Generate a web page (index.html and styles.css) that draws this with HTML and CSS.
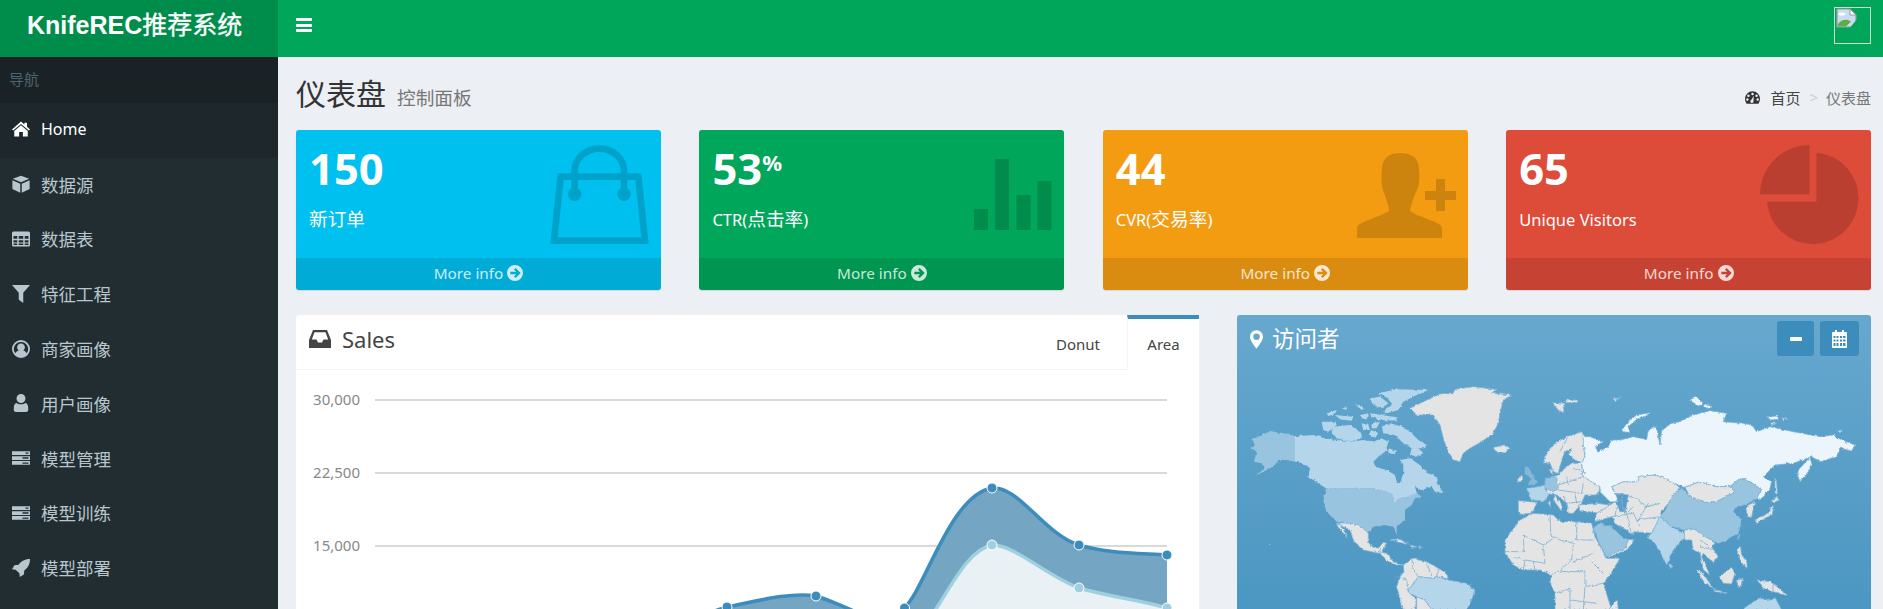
FILE: index.html
```html
<!DOCTYPE html>
<html lang="zh-CN">
<head>
    <meta charset="UTF-8">
    <title>KnifeREC推荐系统</title>
    <link rel="stylesheet" href="styles.css">
</head>
<body>
    <svg class="sprite" width="0" height="0">
        <filter id="coast" x="-5%" y="-5%" width="110%" height="110%">
            <feTurbulence type="fractalNoise" baseFrequency="0.09" numOctaves="3" seed="4"/>
            <feDisplacementMap in="SourceGraphic" scale="9" xChannelSelector="R" yChannelSelector="G"/>
        </filter>
        <symbol id="i-home" viewBox="0 0 24 20"><path d="M12 0 L16.5 4 V1.5 H20 V7 L24 10.5 L22.5 12 L12 3.2 L1.5 12 L0 10.5 Z M12 5 L21 12.5 V20 H14.5 V14 H9.5 V20 H3 V12.5 Z"/></symbol>
        <symbol id="i-cube" viewBox="0 0 24 24"><path d="M12 1 L23 5 L12 9.5 L1 5 Z M0.5 7 L11 11.5 V23.5 L0.5 18.5 Z M23.5 7 V18.5 L13 23.5 V11.5 Z" fill-rule="evenodd"/></symbol>
        <symbol id="i-table" viewBox="0 0 24 20"><path fill-rule="evenodd" d="M2 0 H22 A2 2 0 0 1 24 2 V18 A2 2 0 0 1 22 20 H2 A2 2 0 0 1 0 18 V2 A2 2 0 0 1 2 0 Z M2 6 V9.5 H7 V6 Z M9 6 V9.5 H15 V6 Z M17 6 V9.5 H22 V6 Z M2 11.5 V14.5 H7 V11.5 Z M9 11.5 V14.5 H15 V11.5 Z M17 11.5 V14.5 H22 V11.5 Z M2 16 V18 H7 V16 Z M9 16 V18 H15 V16 Z M17 16 V18 H22 V16 Z"/></symbol>
        <symbol id="i-filter" viewBox="0 0 20 20"><path d="M0 0 H20 L12.5 8.5 V20 L7.5 16.5 V8.5 Z"/></symbol>
        <symbol id="i-circle-user" viewBox="0 0 24 24"><path fill-rule="evenodd" d="M12 0 A12 12 0 1 1 12 24 A12 12 0 1 1 12 0 Z M12 2.5 A9.5 9.5 0 0 0 4.5 17.8 C5.5 15.5 7 14.5 9 14 A5.2 5.2 0 1 1 15 14 C17 14.5 18.5 15.5 19.5 17.8 A9.5 9.5 0 0 0 12 2.5 Z"/></symbol>
        <symbol id="i-user" viewBox="0 0 16 20"><path d="M8 0 A5 5 0 1 1 8 10 A5 5 0 1 1 8 0 Z M3 10 C5 12 11 12 13 10 C15 10.5 16 12.5 16 15.5 V17.5 C16 19 15 20 13.5 20 H2.5 C1 20 0 19 0 17.5 V15.5 C0 12.5 1 10.5 3 10 Z"/></symbol>
        <symbol id="i-server" viewBox="0 0 24 18"><path fill-rule="evenodd" d="M0 0 H24 V5 H0 Z M0 6.5 H24 V11.5 H0 Z M0 13 H24 V18 H0 Z M14 8 V10 H22 V8 Z M14 15 V16.5 H22 V15 Z M18 1.5 V3.2 H22 V1.5 Z"/></symbol>
        <symbol id="i-rocket" viewBox="0 0 22 22"><path d="M22 0 C22 7 19 11 15 14 L14.5 19 L9.5 22 L9 17.5 L4.5 13 L0 12.5 L3 7.5 L8 7 C11 3 15 0 22 0 Z"/></symbol>
        <symbol id="i-arrow" viewBox="0 0 24 24"><path fill-rule="evenodd" d="M12 0 A12 12 0 1 1 12 24 A12 12 0 1 1 12 0 Z M13 4.5 L10.5 7 L13.8 10 H5 V14 H13.8 L10.5 17 L13 19.5 L20.5 12 Z"/></symbol>
    </svg>

    <header class="main-header">
        <div class="logo">KnifeREC<span class="logo-cn">推荐系统</span></div>
        <nav class="navbar">
            <div class="bars"><span></span><span></span><span></span></div>
            <div class="avatar">
                <svg width="21" height="21" viewBox="0 0 21 21">
                    <path d="M1 1 H14 L20 7 V19 H1 Z" fill="#c9dcf2" stroke="#9a9a9a" stroke-width="1.2"/>
                    <ellipse cx="6" cy="6" rx="3.5" ry="1.6" fill="#fff"/>
                    <path d="M2 18.5 V16 C6 11 11 11 15 13.5 L10 18.5 Z" fill="#5fae45"/>
                    <path d="M14 1 V7 H20 Z" fill="#fff" stroke="#9a9a9a"/>
                    <path d="M13 21 L21 11 V21 Z" fill="#00a65a"/>
                </svg>
            </div>
        </nav>
    </header>

    <div class="wrapper">
        <aside class="sidebar">
            <div class="side-label">导航</div>
            <ul class="side-menu">
                <li class="active"><svg class="side-icon"><use href="#i-home"/></svg>Home</li>
                <li><svg class="side-icon"><use href="#i-cube"/></svg>数据源</li>
                <li><svg class="side-icon"><use href="#i-table"/></svg>数据表</li>
                <li><svg class="side-icon"><use href="#i-filter"/></svg>特征工程</li>
                <li><svg class="side-icon"><use href="#i-circle-user"/></svg>商家画像</li>
                <li><svg class="side-icon"><use href="#i-user"/></svg>用户画像</li>
                <li><svg class="side-icon"><use href="#i-server"/></svg>模型管理</li>
                <li><svg class="side-icon"><use href="#i-server"/></svg>模型训练</li>
                <li><svg class="side-icon"><use href="#i-rocket"/></svg>模型部署</li>
            </ul>
        </aside>

        <main class="content">
            <div class="content-header">
                <h1>仪表盘<small>控制面板</small></h1>
                <div class="breadcrumb">
                    <svg class="crumb-icon" viewBox="0 0 24 20">
                        <path fill-rule="evenodd" d="M12 0 A12 12 0 0 1 24 12 C24 15 23 17.5 21.5 20 H2.5 C1 17.5 0 15 0 12 A12 12 0 0 1 12 0 Z M12 2.5 A2 2 0 1 0 12 6.5 A2 2 0 1 0 12 2.5 Z M5.5 5 A2 2 0 1 0 5.5 9 A2 2 0 1 0 5.5 5 Z M18.5 5 A2 2 0 1 0 18.5 9 A2 2 0 1 0 18.5 5 Z M3.7 11 A2 2 0 1 0 3.7 15 A2 2 0 1 0 3.7 11 Z M20.3 11 A2 2 0 1 0 20.3 15 A2 2 0 1 0 20.3 11 Z M14 7 L10 14 A2.5 2.5 0 1 0 13.5 15.5 Z"/>
                    </svg>
                    <span class="crumb-link">首页</span>
                    <span class="crumb-sep">&gt;</span>
                    <span class="crumb-now">仪表盘</span>
                </div>
            </div>

            <section class="stats">
                <div class="stat bg-aqua">
                    <div class="stat-inner">
                        <h3>150</h3>
                        <p>新订单</p>
                    </div>
                    <svg class="stat-icon icon-bag" viewBox="0 0 366 390">
                        <path d="M65 140 H298 L318 332 H45 Z" fill="none" stroke="#000" stroke-width="20"/>
                        <path d="M107 190 V122 A74 66 0 0 1 255 122 V190" fill="none" stroke="#000" stroke-width="20"/>
                        <circle cx="107" cy="193" r="20"/>
                        <circle cx="255" cy="193" r="20"/>
                    </svg>
                    <a class="stat-footer">More info <svg class="arrow-icon"><use href="#i-arrow"/></svg></a>
                </div>
                <div class="stat bg-green">
                    <div class="stat-inner">
                        <h3>53<sup>%</sup></h3>
                        <p><span class="lat">CTR(</span>点击率<span class="lat">)</span></p>
                    </div>
                    <svg class="stat-icon icon-bars" viewBox="0 0 78 71">
                        <rect x="0" y="50" width="14" height="21"/>
                        <rect x="21" y="0" width="14" height="71"/>
                        <rect x="42.5" y="36" width="14" height="35"/>
                        <rect x="63.5" y="22" width="14" height="49"/>
                    </svg>
                    <a class="stat-footer">More info <svg class="arrow-icon"><use href="#i-arrow"/></svg></a>
                </div>
                <div class="stat bg-yellow">
                    <div class="stat-inner">
                        <h3>44</h3>
                        <p><span class="lat">CVR(</span>交易率<span class="lat">)</span></p>
                    </div>
                    <svg class="stat-icon icon-person" viewBox="1340 140 128 110">
                        <path d="M1357 238 V228 C1357 222 1378 218 1389 211 C1389 205 1385 196 1383 190 C1381 184 1381 170 1383 163 C1385 156 1392 153 1400 153 C1408 153 1416 156 1418 163 C1420 172 1420 184 1417 190 C1414 196 1411 205 1410 211 C1420 218 1442 222 1442 228 V238 Z"/>
                        <path d="M1436 179 H1445 V191 H1456 V200 H1445 V211 H1436 V200 H1425 V191 H1436 Z"/>
                    </svg>
                    <a class="stat-footer">More info <svg class="arrow-icon"><use href="#i-arrow"/></svg></a>
                </div>
                <div class="stat bg-red">
                    <div class="stat-inner">
                        <h3>65</h3>
                        <p><span class="lat">Unique Visitors</span></p>
                    </div>
                    <svg class="stat-icon icon-pie" viewBox="830 420 320 320">
                        <path d="M1011 605 V458 A137 137 0 1 1 863 605 Z"/>
                        <path d="M990 582 H842 A148 148 0 0 1 990 435 Z"/>
                    </svg>
                    <a class="stat-footer">More info <svg class="arrow-icon"><use href="#i-arrow"/></svg></a>
                </div>
            </section>

            <section class="panels">
                <div class="sales-box">
                    <div class="tabs">
                        <div class="tabs-title">
                            <svg class="inbox-icon" viewBox="0 0 22 18"><path fill-rule="evenodd" d="M4 0 H18 L22 10 V18 H0 V10 Z M5.5 2.2 L2.8 9.5 H7.5 L9 12.5 H13 L14.5 9.5 H19.2 L16.5 2.2 Z"/></svg>
                            Sales
                        </div>
                        <div class="tab">Donut</div>
                        <div class="tab tab-active">Area</div>
                    </div>
                    <svg class="chart" viewBox="296 370 903 240" width="903" height="240">
                        <g class="grid">
                            <line x1="375" y1="400" x2="1167" y2="400"/>
                            <line x1="375" y1="473" x2="1167" y2="473"/>
                            <line x1="375" y1="546" x2="1167" y2="546"/>
                        </g>
                        <g class="axis">
                            <text x="360" y="405">30,000</text>
                            <text x="360" y="478">22,500</text>
                            <text x="360" y="551">15,000</text>
                        </g>
                        <path class="area-a" d="M650 640 C680 625 700 615 727 607 C757 601 790 592 816 596 C835 602 855 612 875 620 C888 624 898 617 904 608 C925 590 950 495 992 488 C1018 485 1045 535 1079 545 C1105 553 1135 553 1167 555 V640 Z"/>
                        <path class="line-a" d="M650 640 C680 625 700 615 727 607 C757 601 790 592 816 596 C835 602 855 612 875 620 C888 624 898 617 904 608 C925 590 950 495 992 488 C1018 485 1045 535 1079 545 C1105 553 1135 553 1167 555"/>
                        <path class="area-b" d="M925 640 V625 C945 600 965 550 992 545 C1015 545 1045 575 1079 588 C1110 597 1140 600 1167 608 V640 Z"/>
                        <path class="line-b" d="M925 625 C945 600 965 550 992 545 C1015 545 1045 575 1079 588 C1110 597 1140 600 1167 608"/>
                        <g class="dots-a">
                            <circle cx="727" cy="607" r="5"/><circle cx="816" cy="596" r="5"/><circle cx="904.5" cy="608" r="5"/>
                            <circle cx="992" cy="488" r="5"/><circle cx="1079" cy="545" r="5"/><circle cx="1167" cy="555" r="5"/>
                        </g>
                        <g class="dots-b">
                            <circle cx="992" cy="545" r="5"/><circle cx="1079" cy="588" r="5"/><circle cx="1167" cy="608" r="5"/>
                        </g>
                    </svg>
                </div>

                <div class="map-box">
                    <div class="map-head">
                        <svg class="pin-icon" viewBox="0 0 14 20"><path fill-rule="evenodd" d="M7 0 A7 7 0 0 1 14 7 C14 11 9 17 7 20 C5 17 0 11 0 7 A7 7 0 0 1 7 0 Z M7 3.5 A3.5 3.5 0 1 0 7 10.5 A3.5 3.5 0 1 0 7 3.5 Z"/></svg>
                        <h3>访问者</h3>
                        <div class="map-tools">
                            <button class="tool-btn"><span class="minus"></span></button>
                            <button class="tool-btn tool-cal">
                                <svg width="15" height="18" viewBox="0 0 15 18"><path fill="#fff" fill-rule="evenodd" d="M1 2 H3 V0 H5 V2 H10 V0 H12 V2 H14 A1 1 0 0 1 15 3 V17 A1 1 0 0 1 14 18 H1 A1 1 0 0 1 0 17 V3 A1 1 0 0 1 1 2 Z M1.5 6 V8 H3.5 V6 Z M4.5 6 V8 H6.5 V6 Z M8 6 V8 H10 V6 Z M11 6 V8 H13.5 V6 Z M1.5 9.5 V11.5 H3.5 V9.5 Z M4.5 9.5 V11.5 H6.5 V9.5 Z M8 9.5 V11.5 H10 V9.5 Z M11 9.5 V11.5 H13.5 V9.5 Z M1.5 13 V16 H3.5 V13 Z M4.5 13 V16 H6.5 V13 Z M8 13 V16 H10 V13 Z M11 13 V16 H13.5 V13 Z"/></svg>
                            </button>
                        </div>
                    </div>
                    <svg class="world" viewBox="1237 372 634 240" width="634" height="240">
                        <g transform="translate(1240 380) scale(0.3333)" filter="url(#coast)">
                            <!-- north america, greenland -->
                            <g class="c-mid">
                                <path d="M165 168 L130 160 L90 153 L60 168 L35 178 L45 195 L30 205 L50 215 L42 245 L65 250 L75 262 L45 288 L90 265 L105 255 L115 240 L140 240 L165 245 Z"/>
                                <path d="M258 325 L400 325 L440 335 L462 345 L462 370 L480 355 L510 345 L525 335 L545 350 L525 355 L515 375 L495 390 L495 420 L470 440 L470 465 L460 440 L435 435 L400 440 L385 458 L355 435 L330 430 L290 425 L260 395 L250 365 Z"/>
                            </g>
                            <g class="c-light">
                                <path d="M165 168 L230 165 L250 175 L290 180 L330 185 L370 180 L400 185 L425 175 L445 185 L440 205 L445 210 L420 225 L400 245 L405 260 L440 270 L465 285 L470 305 L480 310 L490 280 L490 255 L480 240 L510 235 L540 255 L565 280 L595 295 L590 310 L610 335 L585 335 L575 320 L545 330 L525 320 L530 340 L500 350 L480 355 L462 370 L462 345 L440 335 L400 325 L258 325 L235 310 L205 290 L210 265 L190 250 L165 245 Z"/>
                                <path d="M425 140 L450 130 L490 140 L520 165 L535 180 L560 195 L555 205 L535 205 L550 220 L530 230 L510 225 L515 205 L490 190 L465 165 L430 160 Z"/>
                                <path d="M445 205 L470 212 L465 222 L445 220 Z"/>
                                <path d="M245 125 L285 125 L290 135 L265 155 L250 150 Z"/>
                                <path d="M280 140 L330 135 L365 160 L365 175 L330 185 L290 175 L275 155 Z"/>
                                <path d="M260 100 L290 90 L285 102 L265 108 Z"/>
                                <path d="M285 105 L340 110 L335 122 L300 118 Z"/>
                                <path d="M360 105 L385 100 L380 118 L365 115 Z"/>
                                <path d="M390 100 L470 112 L470 122 L420 120 L395 110 Z"/>
                                <path d="M365 130 L385 135 L390 150 L370 150 Z"/>
                                <path d="M395 130 L420 125 L410 145 L395 145 Z"/>
                                <path d="M395 150 L415 160 L405 175 L390 165 Z"/>
                                <path d="M345 72 L375 85 L365 90 Z"/>
                                <path d="M305 85 L320 80 L320 90 Z"/>
                                <path d="M390 55 L420 50 L445 70 L425 85 L400 75 Z"/>
                                <path d="M415 40 L470 28 L565 30 L530 45 L490 65 L475 90 L440 100 L430 95 L455 75 L445 55 Z"/>
                            </g>
                            <g class="c-land">
                                <path d="M510 85 L560 60 L600 42 L640 38 L645 28 L700 20 L770 28 L755 40 L815 45 L790 60 L780 100 L775 130 L760 160 L725 185 L690 205 L670 220 L660 245 L640 240 L620 205 L610 175 L600 135 L580 105 L530 105 Z"/>
                                <path d="M760 203 L790 195 L810 205 L795 218 L770 218 Z"/>
                                <path d="M290 428 L330 430 L355 435 L385 458 L385 485 L395 500 L415 505 L430 487 L440 490 L430 510 L415 520 L395 515 L370 510 L345 490 L330 450 L310 440 Z"/>
                                <path d="M288 428 L305 440 L325 475 L300 450 Z"/>
                                <path d="M415 515 L440 520 L460 545 L490 555 L470 555 L445 545 L430 530 Z"/>
                                <path d="M450 478 L480 478 L505 492 L480 488 Z"/>
                                <path d="M510 495 L530 500 L515 502 Z"/>
                                <path d="M535 500 L548 503 L537 503 Z"/>
                                <path d="M490 555 L515 535 L560 545 L595 565 L620 580 L625 595 L590 590 L575 595 L535 590 L520 610 L505 635 L530 660 L525 690 L490 690 L470 620 L480 590 L492 575 Z"/>
                                <path d="M530 650 L555 660 L575 690 L530 690 Z"/>
                                <circle cx="89" cy="495" r="2"/>
                            </g>
                            <path class="c-light" d="M535 590 L575 595 L590 590 L625 600 L680 610 L705 630 L695 660 L680 690 L575 690 L555 660 L530 650 L510 640 L505 630 L522 610 Z"/>
                            <path class="borders" d="M515 535 L520 570 L535 590 M560 545 L575 590 M595 565 L590 590 M470 590 L500 600 L505 635 M415 515 L425 505 M440 520 L450 530 M385 485 L395 500"/>

                            <!-- europe, africa, middle east -->
                            <g transform="translate(780 0)">
                                <g class="c-land">
                                    <path d="M135 228 L165 190 L200 170 L245 155 L258 175 L250 195 L255 230 L245 250 L225 240 L205 225 L215 205 L195 215 L185 240 L175 280 L160 275 L150 250 L130 250 Z"/>
                                    <path d="M148 268 L160 268 L155 285 Z"/>
                                    <path d="M175 285 L200 260 L215 250 L245 250 L250 290 L300 320 L295 345 L255 345 L245 370 L220 400 L205 400 L200 370 L170 345 L135 340 L145 325 L140 295 Z"/>
                                    <path d="M165 345 L185 375 L185 395 L175 380 L160 360 Z"/>
                                    <path d="M52 295 L68 285 L68 303 L55 307 Z"/>
                                    <path d="M55 362 L112 367 L95 400 L62 403 L55 395 Z"/>
                                    <path d="M145 365 L152 365 L150 385 Z"/>
                                    <path d="M235 375 L290 370 L330 375 L335 395 L300 400 L265 395 L240 395 Z"/>
                                    <path d="M330 375 L345 365 L360 370 L355 385 L375 400 L385 345 L345 340 L335 320 L370 305 L410 305 L415 290 L460 285 L490 290 L540 320 L505 370 L480 400 L505 420 L510 435 L480 410 L470 440 L460 460 L400 455 L395 465 L380 450 L350 435 L335 410 L285 425 L290 400 Z"/>
                                    <path d="M15 480 L60 420 L100 400 L160 405 L180 425 L230 425 L275 430 L285 470 L320 535 L360 535 L330 585 L310 610 L335 690 L165 690 L165 640 L150 605 L155 585 L120 570 L70 570 L45 560 L15 520 Z"/>
                                    <path d="M325 690 L352 658 L355 690 Z"/>
                                    <path d="M385 478 L405 480 L380 510 L325 532 L318 525 L375 505 Z"/>
                                    <path d="M155 68 L195 70 L190 98 L175 90 Z"/>
                                    <path d="M195 60 L238 60 L230 68 L200 68 Z"/>
                                    <path d="M338 55 L360 55 L345 62 Z"/>
                                </g>
                                <path class="c-mid" d="M280 445 L300 428 L340 445 L365 470 L385 480 L375 505 L320 530 L300 495 Z"/>
                                <path class="c-uk" d="M75 260 L85 262 L105 300 L110 310 L85 315 L95 295 L75 280 Z"/>
                                <path class="c-mid" d="M135 298 L170 290 L175 325 L160 335 L135 325 Z"/>
                                <path class="c-light" d="M80 325 L115 320 L135 315 L135 325 L145 345 L135 365 L95 360 Z"/>
                                <path class="c-light" d="M455 460 L480 410 L500 425 L505 435 L550 460 L580 445 L595 470 L570 470 L545 480 L520 510 L500 555 L480 515 L465 490 L440 470 Z"/>
                                <path class="c-land" d="M510 550 L517 558 L510 565 Z"/>
                                <path class="sea" d="M345 345 L370 340 L365 360 L375 395 L360 395 L350 370 Z"/>
                                <path class="c-russia" d="M250 170 L270 170 L310 185 L285 200 L295 215 L325 200 L335 180 L360 180 L400 170 L440 178 L445 150 L470 140 L475 170 L480 195 L485 150 L515 130 L540 125 L580 105 L630 92 L680 100 L670 125 L730 130 L755 135 L770 155 L810 140 L880 155 L960 170 L1000 165 L1025 180 L1065 195 L1055 213 L1020 205 L1010 230 L960 245 L935 230 L880 250 L825 255 L790 290 L815 305 L810 325 L780 360 L770 355 L785 330 L750 305 L720 295 L690 320 L645 320 L600 305 L555 322 L510 305 L490 290 L460 285 L415 290 L410 305 L370 305 L335 320 L345 340 L355 365 L330 365 L300 335 L300 320 L250 290 L245 250 L255 230 L250 195 Z"/>
                                <path class="c-russia" d="M365 150 L385 125 L410 105 L450 98 L445 105 L410 118 L385 140 L390 158 L370 155 Z"/>
                                <path class="borders" d="M70 465 L72 515 M15 515 L72 515 M70 465 L130 495 L160 475 M150 405 L152 465 L180 480 M230 430 L230 480 L280 480 M180 480 L220 490 L215 540 M130 495 L135 550 M70 570 L75 540 L135 550 M215 540 L175 575 L150 585 M220 545 L280 520 M275 545 L310 580 M180 575 L255 575 L255 620 L310 610 M165 640 L210 625 L210 690 M255 620 L250 690 M210 660 L290 670 M100 545 L105 570 M40 530 L70 540 M175 315 L250 290 M175 330 L245 340 M200 290 L205 315 M220 265 L260 280 M225 340 L230 370 M200 370 L245 365 M190 345 L205 385 M250 310 L245 340 M385 345 L400 350 L440 380 L480 370 M400 380 L380 400 M335 410 L400 400 L420 440 M380 400 L395 465 M410 420 L480 410 M445 370 L415 420 M345 410 L350 380 M180 215 L205 170"/>
                            </g>

                            <!-- east asia -->
                            <g transform="translate(1260 0)">
                                <g class="c-russia">
                                    <path d="M88 60 L110 50 L130 70 L115 78 Z"/>
                                    <path d="M130 78 L145 72 L155 82 L135 85 Z"/>
                                    <path d="M320 110 L355 108 L355 118 L330 120 Z"/>
                                    <path d="M335 128 L350 130 L335 135 Z"/>
                                    <path d="M365 113 L385 118 L370 120 Z"/>
                                    <path d="M532 153 L547 152 L540 158 Z"/>
                                    <path d="M415 270 L450 232 L455 250 L445 275 L420 305 L413 285 Z"/>
                                </g>
                                <path class="c-land" d="M75 322 L120 305 L165 320 L210 320 L225 335 L170 365 L140 368 L90 350 Z"/>
                                <path class="c-mid" d="M65 322 L90 350 L140 368 L170 365 L225 335 L210 320 L240 295 L270 305 L305 330 L290 355 L265 370 L225 385 L220 395 L245 420 L235 460 L200 480 L175 490 L150 478 L120 460 L100 445 L70 450 L30 437 L20 425 L0 410 L20 385 L25 370 L40 345 Z"/>
                                <g class="c-land">
                                    <path d="M265 375 L285 365 L280 385 L275 412 L262 410 L258 385 Z"/>
                                    <path d="M285 420 L325 400 L335 375 L340 380 L338 400 L315 415 L290 430 Z"/>
                                    <path d="M335 360 L350 350 L358 360 L340 368 Z"/>
                                    <path d="M345 292 L350 305 L352 340 L345 340 Z"/>
                                    <path d="M72 452 L100 445 L120 460 L150 478 L165 490 L155 500 L175 530 L160 548 L130 520 L125 530 L150 585 L130 570 L120 520 L100 510 L95 480 L75 480 Z"/>
                                    <path d="M108 570 L125 575 L160 625 L135 610 Z"/>
                                    <path d="M178 590 L215 562 L225 580 L215 612 L190 610 Z"/>
                                    <path d="M160 628 L205 640 L165 635 Z"/>
                                    <path d="M230 600 L250 598 L245 620 L235 622 Z"/>
                                    <path d="M235 502 L242 500 L245 525 L260 545 L262 565 L250 555 L232 520 Z"/>
                                    <path d="M235 468 L240 465 L236 480 Z"/>
                                    <path d="M290 600 L330 605 L345 615 L385 648 L340 635 L310 625 Z"/>
                                    <path d="M28 548 L35 560 L28 565 Z"/>
                                </g>
                                <path class="c-light" d="M245 690 L295 655 L335 660 L345 652 L365 690 Z"/>
                                <path class="borders" d="M120 480 L150 500 M120 500 L165 510 M340 610 L338 640"/>
                            </g>
                        </g>
                    </svg>
                </div>
            </section>
        </main>
    </div>
</body>
</html>
```

FILE: styles.css
```css
* {
    box-sizing: border-box;
}
html, body {
    height: 609px;
    overflow: hidden;
}
body {
    margin: 0;
    font-family: "Noto Sans", "Noto Sans CJK SC", sans-serif;
    background: #ecf0f5;
    color: #333;
}
.sprite {
    display: block;
}

/* header */
.main-header {
    display: flex;
    height: 57px;
}
.logo {
    width: 278px;
    padding-left: 27px;
    background: #008d4c;
    color: #fff;
    font: bold 25px/50px "Liberation Sans", "Noto Sans CJK SC", sans-serif;
}
.logo-cn {
    font-weight: 400;
    -webkit-text-stroke: 0.35px #fff;
}
.navbar {
    flex: 1;
    display: flex;
    justify-content: space-between;
    background: #00a65a;
    padding: 7px 12px 0 18px;
}
.bars {
    display: flex;
    flex-direction: column;
    gap: 2.5px;
    width: 16px;
    padding-top: 11px;
}
.bars span {
    display: block;
    height: 3px;
    background: #fff;
    border-radius: 1px;
}
.avatar {
    width: 37px;
    height: 37px;
    border: 1px solid #c9dcd2;
    padding-left: 1px;
}
.avatar svg {
    display: block;
}

/* sidebar */
.wrapper {
    display: flex;
    height: 552px;
}
.sidebar {
    width: 278px;
    background: #222d32;
    flex-shrink: 0;
}
.side-label {
    height: 46px;
    padding-left: 9px;
    background: #1a2226;
    color: #4b646f;
    font-size: 15px;
    line-height: 45px;
}
.side-menu {
    list-style: none;
    margin: 0;
    padding: 0;
}
.side-menu li {
    display: flex;
    align-items: center;
    height: 54.8px;
    padding-bottom: 2px;
    color: #b8c7ce;
    font-size: 17.5px;
}
.side-menu li.active {
    background: #1e282c;
    color: #fff;
    font-size: 16px;
}
.side-icon {
    width: 18px;
    height: 18px;
    margin: 0 11px 0 12px;
    fill: currentColor;
    flex-shrink: 0;
}

/* page title */
.content {
    flex: 1;
    padding: 0 12px 0 18px;
    min-width: 0;
}
.content-header {
    display: flex;
    justify-content: space-between;
    align-items: center;
    height: 73px;
}
.content-header h1 {
    margin: 0;
    padding-top: 4px;
    color: #333;
    font-size: 30px;
    font-weight: 400;
    line-height: 44px;
}
.content-header small {
    margin-left: 11px;
    color: #777;
    font-size: 18.7px;
}
.breadcrumb {
    display: flex;
    align-items: center;
    font-size: 15px;
    padding-top: 7px;
    color: #444;
}
.crumb-icon {
    width: 15px;
    height: 13px;
    fill: #333;
    margin-right: 10px;
}
.crumb-sep {
    margin: 0 8px 0 9px;
    color: #ccc;
}
.crumb-now {
    color: #777;
}

/* small boxes */
.stats {
    display: grid;
    grid-template-columns: repeat(4, 365px);
    column-gap: 38.4px;
}
.stat {
    position: relative;
    height: 160px;
    border-radius: 3px;
    color: #fff;
    box-shadow: 0 1px 1px rgba(0, 0, 0, 0.1);
    overflow: hidden;
}
.stat-inner {
    height: 128px;
    padding: 9px 13px;
}
.stat h3 {
    margin: 0;
    font-size: 43.5px;
    font-weight: 700;
    line-height: 58px;
}
.stat sup {
    font-size: 22px;
    font-weight: 700;
    line-height: 0;
    vertical-align: 14px;
}
.stat p {
    margin: 9px 0 0;
    font-size: 18.7px;
    line-height: 26px;
}
.lat {
    font-size: 16.5px;
}
.stat-icon {
    position: absolute;
    fill: #000;
    opacity: 0.15;
}
.icon-bag {
    top: 0;
    right: 0;
    width: 122px;
    height: 130px;
}
.icon-bars {
    top: 29px;
    right: 12px;
    width: 78px;
    height: 71px;
}
.icon-person {
    top: 10px;
    right: 0;
    width: 128px;
    height: 110px;
}
.icon-pie {
    top: 10px;
    right: 8px;
    width: 107px;
    height: 107px;
}
.stat-footer {
    display: flex;
    justify-content: center;
    align-items: center;
    gap: 4px;
    height: 32px;
    padding-bottom: 2px;
    background: rgba(0, 0, 0, 0.1);
    color: rgba(255, 255, 255, 0.8);
    font-size: 15.3px;
}
.arrow-icon {
    width: 16px;
    height: 16px;
    fill: currentColor;
}
.bg-aqua { background: #00c0ef; }
.bg-green { background: #00a65a; }
.bg-yellow { background: #f39c12; }
.bg-red { background: #dd4b39; }

/* lower panels */
.panels {
    display: grid;
    grid-template-columns: 903px 634px;
    column-gap: 38px;
    margin-top: 25px;
}
.sales-box {
    height: 400px;
    background: #fff;
    border-radius: 3px 3px 0 0;
}
.tabs {
    display: flex;
    align-items: flex-end;
    height: 55px;
}
.tabs-title {
    flex: 1;
    display: flex;
    align-items: center;
    gap: 11px;
    align-self: stretch;
    padding: 0 0 6px 13px;
    border-bottom: 1px solid #f4f4f4;
    color: #444;
    font-size: 22px;
}
.inbox-icon {
    width: 22px;
    height: 18px;
    fill: #444;
}
.tab {
    align-self: stretch;
    width: 72px;
    padding-top: 19px;
    border-bottom: 1px solid #f4f4f4;
    color: #444;
    font-size: 15px;
    text-align: center;
}
.tabs-title + .tab {
    width: 98px;
}
.tab-active {
    border-top: 4px solid #3c8dbc;
    border-left: 1px solid #f4f4f4;
    border-bottom: 0;
    padding-top: 15px;
}
.chart {
    display: block;
}
.grid line {
    stroke: #ccc;
    stroke-width: 1.5;
}
.axis text {
    fill: #888;
    font-size: 15px;
    text-anchor: end;
}
.area-a { fill: #74a5c2; }
.area-b { fill: #e9f1f5; }
.line-a, .line-b {
    fill: none;
    stroke-width: 3.5;
}
.line-a { stroke: #3c8dbc; }
.line-b { stroke: #a0d0e0; }
.dots-a circle, .dots-b circle {
    stroke: #fff;
    stroke-width: 1;
}
.dots-a circle { fill: #3c8dbc; }
.dots-b circle { fill: #a0d0e0; }

.map-box {
    height: 460px;
    border-radius: 3px;
    background: linear-gradient(to bottom, #67a8ce, #3c8dbc);
    color: #fff;
}
.map-head {
    display: flex;
    align-items: flex-start;
    height: 57px;
    padding: 6px 12px 0 13px;
}
.pin-icon {
    width: 13px;
    height: 19px;
    margin-top: 9px;
    fill: #fff;
}
.map-head h3 {
    flex: 1;
    margin: 0 0 0 9px;
    font-size: 22.5px;
    font-weight: 400;
    line-height: 35px;
}
.map-tools {
    display: flex;
    gap: 6px;
}
.tool-btn {
    display: flex;
    justify-content: center;
    align-items: center;
    width: 37px;
    height: 35px;
    padding: 0;
    border: 0;
    border-radius: 3px;
    background: #3c8dbc;
}
.tool-cal {
    width: 39px;
}
.minus {
    display: block;
    width: 12px;
    height: 4px;
    border-radius: 1px;
    background: #fff;
}
.world {
    display: block;
}
.world path, .world circle {
    stroke: #7fb4d5;
    stroke-width: 2.4;
}
.c-land { fill: #e4e4e4; }
.c-light { fill: #b5d6ea; }
.c-mid { fill: #98c4df; }
.c-uk { fill: #86b9d8; }
.c-russia { fill: #ebf5fb; stroke: #b5d6ea; }
.sea { fill: #5a9dc8; }
.world .borders {
    fill: none;
    stroke-width: 2.6;
}
.c-light path, .c-mid path {
    stroke: none;
}
```
